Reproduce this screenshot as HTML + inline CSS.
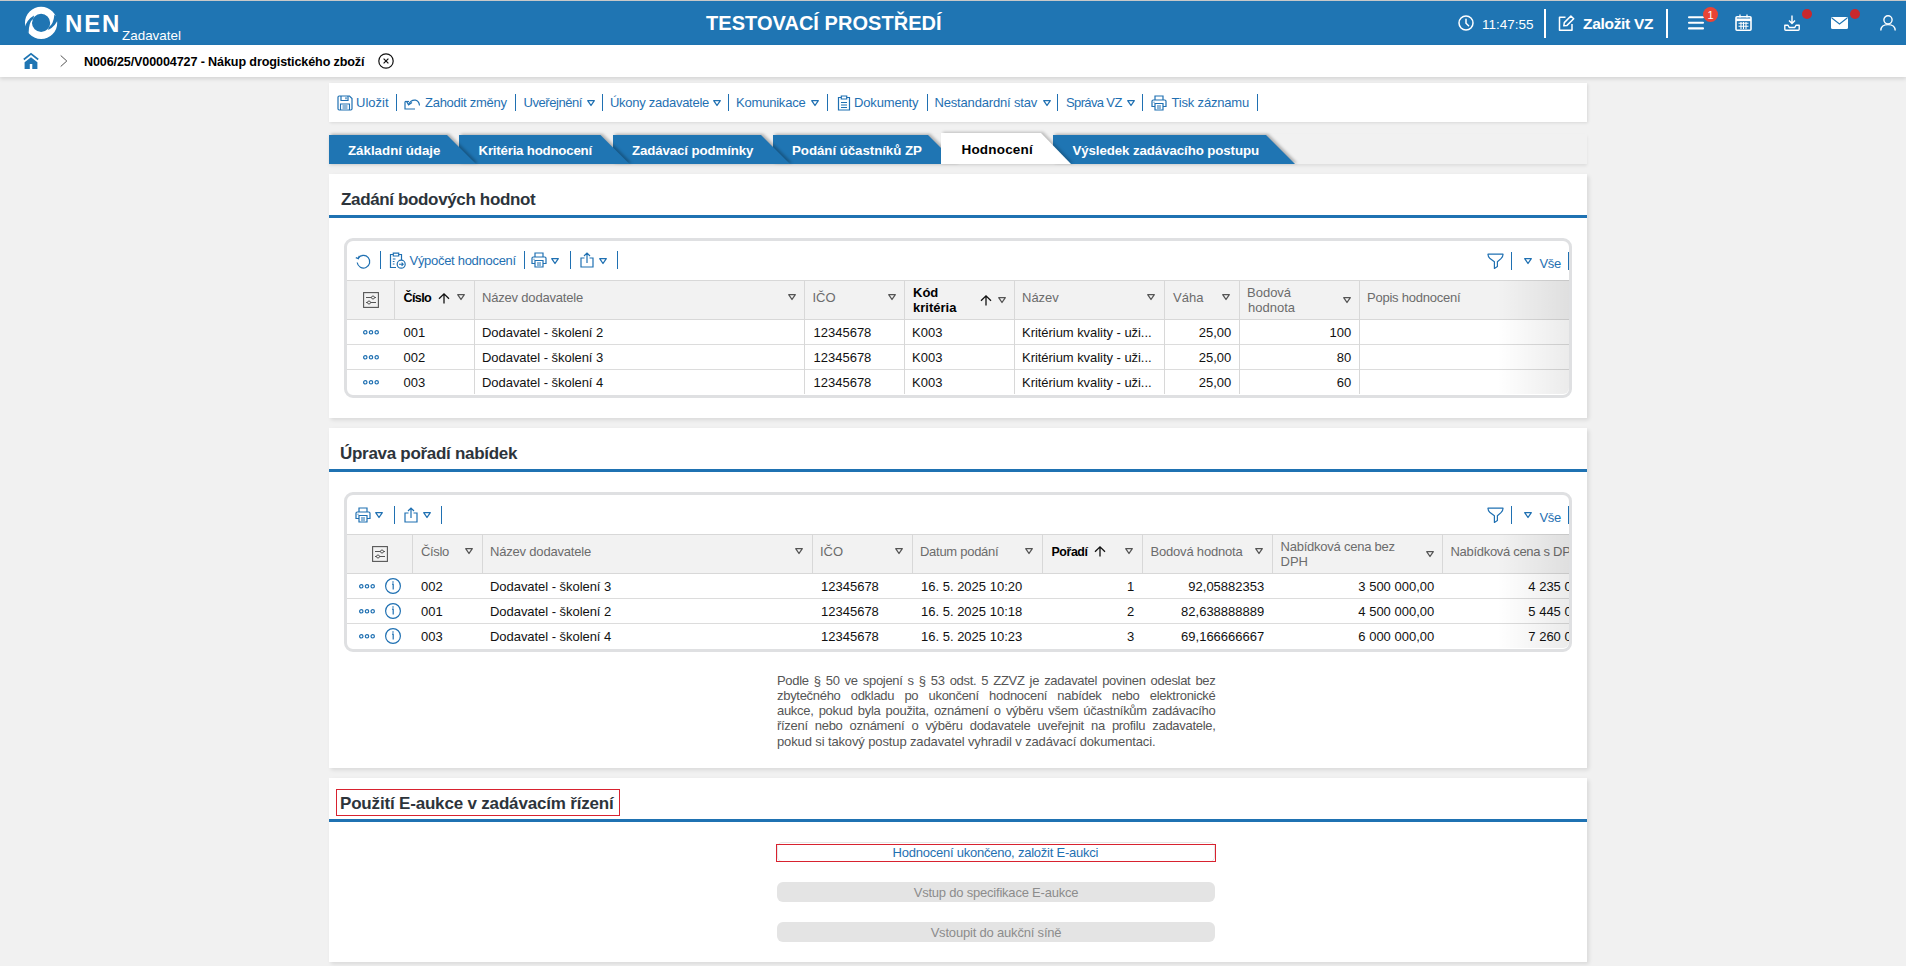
<!DOCTYPE html><html><head><meta charset="utf-8"><style>
*{box-sizing:border-box;margin:0;padding:0}
html,body{width:1906px;height:966px;overflow:hidden}
body{background:#f1f1f1;font-family:"Liberation Sans",sans-serif;position:relative;color:#111}
.a,.t{position:absolute}
.t{white-space:nowrap}
svg{position:absolute;overflow:visible}
</style></head><body><div class="a" style="left:0px;top:0px;width:1906px;height:1px;background:#c8c8c8"></div><div class="a" style="left:0px;top:1px;width:1906px;height:44px;background:#1f75b3"></div><svg style="left:20px;top:2px" width="44" height="42" viewBox="20 2 44 42"><circle cx="41.1" cy="22.9" r="12.6" fill="none" stroke="#fff" stroke-width="7"/>
<path d="M24.2 28.8 Q26.8 19.5 34 15.6 L33.6 18.4 Q28.8 21.5 28.6 33.2 Z" fill="#1f75b3"/>
<path d="M58.2 18.6 Q55.6 26.6 48.2 30 L48.4 27.6 Q53.6 24.4 54.4 14.6 Z" fill="#1f75b3"/></svg><div class="t" style="left:65.00px;top:9px;font-size:24px;line-height:29px;color:#fff;font-weight:bold;letter-spacing:1.830px;">NEN</div><div class="t" style="left:122.00px;top:28px;font-size:13.4px;line-height:16px;color:#fff;letter-spacing:0.021px;">Zadavatel</div><div class="t" style="left:706.00px;top:11px;font-size:20px;line-height:24px;color:#fff;font-weight:bold;letter-spacing:0.040px;">TESTOVACÍ PROSTŘEDÍ</div><svg style="left:1458px;top:15px" width="16" height="16" viewBox="0 0 16 16"><circle cx="8" cy="8" r="7" fill="none" stroke="#fff" stroke-width="1.5"/><path d="M8 4.2V8.3L10.6 10.8" fill="none" stroke="#fff" stroke-width="1.5" stroke-linecap="round"/></svg><div class="t" style="left:1482.00px;top:16.5px;font-size:13.5px;line-height:16px;color:#fff;letter-spacing:-0.006px;">11:47:55</div><div class="a" style="left:1544px;top:9px;width:2px;height:29px;background:#fff"></div><svg style="left:1558px;top:15px" width="17" height="16" viewBox="0 0 17 16"><path d="M7.5 2.2H1.5V15.2H14V9" fill="none" stroke="#fff" stroke-width="1.5" stroke-linejoin="round"/><path d="M5.8 10.8L6.3 7.6L12.9 1L15.7 3.8L9 10.4Z" fill="none" stroke="#fff" stroke-width="1.5" stroke-linejoin="round"/></svg><div class="t" style="left:1583.00px;top:14px;font-size:15.5px;line-height:19px;color:#fff;font-weight:bold;letter-spacing:-0.303px;">Založit VZ</div><div class="a" style="left:1666px;top:9px;width:2px;height:29px;background:#fff"></div><svg style="left:1688px;top:16px" width="16" height="14" viewBox="0 0 16 14"><path d="M1 1.2H15M1 6.8H15M1 12.4H15" stroke="#fff" stroke-width="2.1" stroke-linecap="round"/></svg><div class="a" style="left:1703px;top:7px;width:15px;height:15px;background:#ea4435;border-radius:50%"></div><div class="t" style="left:1707.50px;top:8.5px;font-size:11px;line-height:13px;color:#fff;">1</div><svg style="left:1735px;top:14px" width="17" height="17" viewBox="0 0 17 17"><rect x="1" y="2.8" width="15" height="13.4" rx="1" fill="none" stroke="#fff" stroke-width="1.6"/><path d="M1 5.8H16" stroke="#fff" stroke-width="2.6"/><path d="M5 0.5V3.5M12 0.5V3.5" stroke="#fff" stroke-width="1.3"/><path d="M3.5 9.3H13.5M3.5 12.3H13.5M6 8V15M8.5 8V15M11 8V15" stroke="#fff" stroke-width="1.1"/></svg><svg style="left:1784px;top:15px" width="16" height="16" viewBox="0 0 16 16"><path d="M8 0.5V8.5M5 5.6L8 8.6L11 5.6" fill="none" stroke="#fff" stroke-width="1.4"/><path d="M0.8 10.2V14.2Q0.8 15.2 1.8 15.2H14.2Q15.2 15.2 15.2 14.2V10.2H12L10.8 12.5H5.2L4 10.2Z" fill="none" stroke="#fff" stroke-width="1.4" stroke-linejoin="round"/></svg><div class="a" style="left:1802px;top:9px;width:10px;height:10px;background:#c8282d;border-radius:50%"></div><svg style="left:1831px;top:17px" width="17" height="12" viewBox="0 0 17 12"><rect x="0" y="0" width="17" height="12" rx="1.5" fill="#fff"/><path d="M0.8 1L8.5 7L16.2 1" fill="none" stroke="#1f75b3" stroke-width="1.1"/></svg><div class="a" style="left:1850px;top:9px;width:10px;height:10px;background:#c8282d;border-radius:50%"></div><svg style="left:1880px;top:15px" width="16" height="16" viewBox="0 0 16 16"><circle cx="8" cy="4.8" r="4.1" fill="none" stroke="#fff" stroke-width="1.4"/><path d="M0.8 15.6C0.8 11.6 3.8 9.6 8 9.6S15.2 11.6 15.2 15.6" fill="none" stroke="#fff" stroke-width="1.4"/></svg><div class="a" style="left:0px;top:45px;width:1906px;height:32px;background:#fff;box-shadow:0 2px 4px rgba(0,0,0,.12)"></div><svg style="left:23px;top:53px" width="16" height="16" viewBox="0 0 16 16"><path d="M0.8 6.5L8 0.8L15.2 6.5" fill="none" stroke="#1f75b3" stroke-width="1.7"/><path d="M1.6 16V9.2L8 4.2L14.4 9.2V16H9.3V11H6.8V16Z" fill="#1f75b3"/></svg><svg style="left:60px;top:55px" width="8" height="12" viewBox="0 0 8 12"><path d="M0.7 0.5L6.8 6L0.7 11.5" fill="none" stroke="#555" stroke-width="1"/></svg><div class="t" style="left:84.00px;top:55px;font-size:12.6px;line-height:15px;color:#000;font-weight:bold;letter-spacing:-0.131px;">N006/25/V00004727 - Nákup drogistického zboží</div><svg style="left:378px;top:53px" width="16" height="16" viewBox="0 0 16 16"><circle cx="8" cy="8" r="7.2" fill="none" stroke="#111" stroke-width="1.2"/><path d="M5.6 5.6L10.4 10.4M10.4 5.6L5.6 10.4" stroke="#111" stroke-width="1.2"/></svg><div class="a" style="left:329px;top:83px;width:1258px;height:39px;background:#fff;box-shadow:1px 1px 3px rgba(0,0,0,.10)"></div><svg style="left:337px;top:95px" width="16" height="16" viewBox="0 0 16 16"><path d="M1 2.2Q1 1 2.2 1H12.5L15 3.5V13.8Q15 15 13.8 15H2.2Q1 15 1 13.8Z" fill="none" stroke="#1f70b2" stroke-width="1.2"/><path d="M4 1V5.5H11V1M9 2.2V4.3" fill="none" stroke="#1f70b2" stroke-width="1.2"/><path d="M3.5 15V9H12.5V15M5.5 11H10.5M5.5 13H10.5" fill="none" stroke="#1f70b2" stroke-width="1.1"/></svg><div class="t" style="left:356.00px;top:95px;font-size:13px;line-height:16px;color:#1f70b2;letter-spacing:0.021px;">Uložit</div><div class="a" style="left:396px;top:94px;width:1px;height:17px;background:#1f70b2"></div><svg style="left:404px;top:96px" width="17" height="14" viewBox="0 0 17 14"><path d="M1 5.5V13H11" fill="none" stroke="#1f70b2" stroke-width="1.2"/><path d="M4.5 8.5Q7 3.5 11.5 4.2Q15 5 15.5 9.5" fill="none" stroke="#1f70b2" stroke-width="1.2"/><path d="M2.5 5.2L4.6 8.8L8 6.6" fill="none" stroke="#1f70b2" stroke-width="1.2"/><path d="M1 5.5H5" stroke="#1f70b2" stroke-width="1.2"/></svg><div class="t" style="left:425.00px;top:95px;font-size:13px;line-height:16px;color:#1f70b2;letter-spacing:-0.272px;">Zahodit změny</div><div class="a" style="left:515px;top:94px;width:1px;height:17px;background:#1f70b2"></div><div class="t" style="left:523.60px;top:95px;font-size:13px;line-height:16px;color:#1f70b2;letter-spacing:-0.451px;">Uveřejnění</div><svg style="left:587px;top:100px" width="8" height="6" viewBox="0 0 8 6"><path d="M0.7 0.7H7.3L4.0 5.5Z" fill="none" stroke="#1f70b2" stroke-width="1.3" stroke-linejoin="round"/></svg><div class="a" style="left:602px;top:94px;width:1px;height:17px;background:#1f70b2"></div><div class="t" style="left:610.00px;top:95px;font-size:13px;line-height:16px;color:#1f70b2;letter-spacing:-0.274px;">Úkony zadavatele</div><svg style="left:713px;top:100px" width="8" height="6" viewBox="0 0 8 6"><path d="M0.7 0.7H7.3L4.0 5.5Z" fill="none" stroke="#1f70b2" stroke-width="1.3" stroke-linejoin="round"/></svg><div class="a" style="left:728px;top:94px;width:1px;height:17px;background:#1f70b2"></div><div class="t" style="left:736.00px;top:95px;font-size:13px;line-height:16px;color:#1f70b2;letter-spacing:-0.201px;">Komunikace</div><svg style="left:811px;top:100px" width="8" height="6" viewBox="0 0 8 6"><path d="M0.7 0.7H7.3L4.0 5.5Z" fill="none" stroke="#1f70b2" stroke-width="1.3" stroke-linejoin="round"/></svg><div class="a" style="left:827px;top:94px;width:1px;height:17px;background:#1f70b2"></div><svg style="left:837px;top:95px" width="14" height="16" viewBox="0 0 14 16"><path d="M4 2.5H1.5V15H12.5V2.5H10" fill="none" stroke="#1f70b2" stroke-width="1.2"/><path d="M4.3 1H9.7V4H4.3Z" fill="none" stroke="#1f70b2" stroke-width="1.2"/><path d="M4 7.5H10M4 10H10M4 12.5H10" stroke="#1f70b2" stroke-width="1.1"/></svg><div class="t" style="left:854.00px;top:95px;font-size:13px;line-height:16px;color:#1f70b2;letter-spacing:-0.156px;">Dokumenty</div><div class="a" style="left:927px;top:94px;width:1px;height:17px;background:#1f70b2"></div><div class="t" style="left:934.50px;top:95px;font-size:13px;line-height:16px;color:#1f70b2;letter-spacing:-0.169px;">Nestandardní stav</div><svg style="left:1043px;top:100px" width="8" height="6" viewBox="0 0 8 6"><path d="M0.7 0.7H7.3L4.0 5.5Z" fill="none" stroke="#1f70b2" stroke-width="1.3" stroke-linejoin="round"/></svg><div class="a" style="left:1057px;top:94px;width:1px;height:17px;background:#1f70b2"></div><div class="t" style="left:1066.00px;top:95px;font-size:13px;line-height:16px;color:#1f70b2;letter-spacing:-0.634px;">Správa VZ</div><svg style="left:1127px;top:100px" width="8" height="6" viewBox="0 0 8 6"><path d="M0.7 0.7H7.3L4.0 5.5Z" fill="none" stroke="#1f70b2" stroke-width="1.3" stroke-linejoin="round"/></svg><div class="a" style="left:1142px;top:94px;width:1px;height:17px;background:#1f70b2"></div><svg style="left:1151px;top:95px" width="16" height="16" viewBox="0 0 16 16"><path d="M4 5V1H12V5" fill="none" stroke="#1f70b2" stroke-width="1.2"/><path d="M4 11.5H1V6.3Q1 5 2.3 5H13.7Q15 5 15 6.3V11.5H12" fill="none" stroke="#1f70b2" stroke-width="1.2"/><path d="M4 8.5H12V15H4Z" fill="none" stroke="#1f70b2" stroke-width="1.2"/><path d="M6 11H10M6 13H10M2.5 7.2H3.5" stroke="#1f70b2" stroke-width="1.1"/></svg><div class="t" style="left:1171.50px;top:95px;font-size:13px;line-height:16px;color:#1f70b2;letter-spacing:-0.180px;">Tisk záznamu</div><div class="a" style="left:1257px;top:94px;width:1px;height:17px;background:#1f70b2"></div><div class="a" style="left:329px;top:134px;width:1258px;height:30px;box-shadow:0 2px 3px rgba(0,0,0,.08)"></div><svg style="left:1053px;top:135px" width="242" height="29" viewBox="0 0 242 29"><path d="M0 0H213L242 29H0Z" fill="#1f75b3" style="filter:drop-shadow(2px -1px 1.5px rgba(0,0,0,.28))"/></svg><div class="t" style="left:1072.50px;top:143px;font-size:13.3px;line-height:16px;color:#fff;font-weight:bold;letter-spacing:-0.098px;">Výsledek zadávacího postupu</div><svg style="left:773px;top:135px" width="184" height="29" viewBox="0 0 184 29"><path d="M0 0H155L184 29H0Z" fill="#1f75b3" style="filter:drop-shadow(2px -1px 1.5px rgba(0,0,0,.28))"/></svg><div class="t" style="left:792.00px;top:143px;font-size:13.3px;line-height:16px;color:#fff;font-weight:bold;letter-spacing:-0.050px;">Podání účastníků ZP</div><svg style="left:613px;top:135px" width="177" height="29" viewBox="0 0 177 29"><path d="M0 0H148L177 29H0Z" fill="#1f75b3" style="filter:drop-shadow(2px -1px 1.5px rgba(0,0,0,.28))"/></svg><div class="t" style="left:632.00px;top:143px;font-size:13.3px;line-height:16px;color:#fff;font-weight:bold;letter-spacing:-0.126px;">Zadávací podmínky</div><svg style="left:459px;top:135px" width="170.5" height="29" viewBox="0 0 170.5 29"><path d="M0 0H141.5L170.5 29H0Z" fill="#1f75b3" style="filter:drop-shadow(2px -1px 1.5px rgba(0,0,0,.28))"/></svg><div class="t" style="left:478.50px;top:143px;font-size:13.3px;line-height:16px;color:#fff;font-weight:bold;letter-spacing:-0.222px;">Kritéria hodnocení</div><svg style="left:329px;top:135px" width="147" height="29" viewBox="0 0 147 29"><path d="M0 0H118L147 29H0Z" fill="#1f75b3" style="filter:drop-shadow(2px -1px 1.5px rgba(0,0,0,.28))"/></svg><div class="t" style="left:348.00px;top:143px;font-size:13.3px;line-height:16px;color:#fff;font-weight:bold;letter-spacing:0.002px;">Základní údaje</div><svg style="left:941px;top:133px" width="130" height="31" viewBox="0 0 130 31"><path d="M0 0H100L130 31H0Z" fill="#fff" style="filter:drop-shadow(2px -1px 1.5px rgba(0,0,0,.22))"/></svg><div class="t" style="left:961.50px;top:142px;font-size:13.5px;line-height:16px;color:#000;font-weight:bold;letter-spacing:0.188px;">Hodnocení</div><div class="a" style="left:329px;top:174px;width:1258px;height:244px;background:#fff;box-shadow:2px 2px 4px rgba(0,0,0,.10)"></div><div class="t" style="left:341.00px;top:189.5px;font-size:17px;line-height:20px;color:#2d343b;font-weight:bold;letter-spacing:-0.354px;">Zadání bodových hodnot</div><div class="a" style="left:329px;top:215px;width:1258px;height:3px;background:#1f72b2"></div><div class="a" style="left:344px;top:238px;width:1228px;height:160px;border:3px solid #dfe0e2;border-radius:9px;background:#fff"></div><svg style="left:355px;top:254px" width="17" height="15" viewBox="0 0 17 15"><path d="M3.2 4.2A6.3 6.3 0 1 1 2.2 8.5" fill="none" stroke="#1f70b2" stroke-width="1.2"/><path d="M0.8 3.6L3.4 4.6L4.2 1.8" fill="none" stroke="#1f70b2" stroke-width="1.2"/></svg><div class="a" style="left:380px;top:251px;width:1px;height:18px;background:#1f70b2"></div><svg style="left:389px;top:252px" width="17" height="17" viewBox="0 0 17 17"><path d="M4 2.5H1.5V15.5H7" fill="none" stroke="#1f70b2" stroke-width="1.2"/><path d="M10 2.5H12.5V8" fill="none" stroke="#1f70b2" stroke-width="1.2"/><path d="M4.3 4H9.7V1.2H4.3Z" fill="none" stroke="#1f70b2" stroke-width="1.2"/><path d="M3.8 7H6.5M3.8 9.5H5.5M3.8 12H5.5" stroke="#1f70b2" stroke-width="1.1"/><circle cx="12.2" cy="12.2" r="4" fill="#fff" stroke="#1f70b2" stroke-width="1.2"/><path d="M10 12.2H14.2M12.6 10.6L14.2 12.2L12.6 13.8" fill="none" stroke="#1f70b2" stroke-width="1.1"/></svg><div class="t" style="left:409.50px;top:253px;font-size:13px;line-height:16px;color:#1f70b2;letter-spacing:-0.293px;">Výpočet hodnocení</div><div class="a" style="left:524px;top:251px;width:1px;height:18px;background:#1f70b2"></div><svg style="left:531px;top:252px" width="16" height="16" viewBox="0 0 16 16"><path d="M4 5V1H12V5" fill="none" stroke="#1f70b2" stroke-width="1.2"/><path d="M4 11.5H1V6.3Q1 5 2.3 5H13.7Q15 5 15 6.3V11.5H12" fill="none" stroke="#1f70b2" stroke-width="1.2"/><path d="M4 8.5H12V15H4Z" fill="none" stroke="#1f70b2" stroke-width="1.2"/><path d="M6 11H10M6 13H10M2.5 7.2H3.5" stroke="#1f70b2" stroke-width="1.1"/></svg><svg style="left:551px;top:258px" width="8" height="6" viewBox="0 0 8 6"><path d="M0.7 0.7H7.3L4.0 5.5Z" fill="none" stroke="#1f70b2" stroke-width="1.3" stroke-linejoin="round"/></svg><div class="a" style="left:570px;top:251px;width:1px;height:18px;background:#1f70b2"></div><svg style="left:580px;top:252px" width="14" height="16" viewBox="0 0 14 16"><path d="M4.5 6H1V15H13V6H9.5" fill="none" stroke="#1f70b2" stroke-width="1.2"/><path d="M7 11V1M4 4L7 1L10 4" fill="none" stroke="#1f70b2" stroke-width="1.2"/></svg><svg style="left:599px;top:258px" width="8" height="6" viewBox="0 0 8 6"><path d="M0.7 0.7H7.3L4.0 5.5Z" fill="none" stroke="#1f70b2" stroke-width="1.3" stroke-linejoin="round"/></svg><div class="a" style="left:617px;top:251px;width:1px;height:18px;background:#1f70b2"></div><svg style="left:1487px;top:253px" width="17" height="16" viewBox="0 0 17 16"><path d="M1 1.2H16Q16.2 3.6 14 5.6L10.4 8.8V13.6L7.4 15.4V8.8L3 5.6Q0.8 3.6 1 1.2Z" fill="none" stroke="#1f70b2" stroke-width="1.2" stroke-linejoin="round"/></svg><div class="a" style="left:1511px;top:252px;width:1px;height:18px;background:#1f70b2"></div><svg style="left:1524px;top:258px" width="8" height="6" viewBox="0 0 8 6"><path d="M0.7 0.7H7.3L4.0 5.5Z" fill="none" stroke="#1f70b2" stroke-width="1.3" stroke-linejoin="round"/></svg><div class="t" style="left:1539.50px;top:255.5px;font-size:13px;line-height:16px;color:#1f70b2;letter-spacing:-0.335px;">Vše</div><div class="a" style="left:1568px;top:252px;width:1px;height:18px;background:#1f70b2"></div><div class="a" style="left:347px;top:280px;width:1222px;height:40px;background:#f2f2f2;border-top:1px solid #d8d8d8;border-bottom:1px solid #d8d8d8"></div><div class="a" style="left:347px;top:344px;width:1222px;height:1px;background:#dcdcdc"></div><div class="a" style="left:347px;top:369px;width:1222px;height:1px;background:#dcdcdc"></div><div class="a" style="left:394px;top:281px;width:1px;height:38px;background:#d8d8d8"></div><div class="a" style="left:474px;top:281px;width:1px;height:113px;background:#d8d8d8"></div><div class="a" style="left:804px;top:281px;width:1px;height:113px;background:#d8d8d8"></div><div class="a" style="left:904px;top:281px;width:1px;height:113px;background:#d8d8d8"></div><div class="a" style="left:1014px;top:281px;width:1px;height:113px;background:#d8d8d8"></div><div class="a" style="left:1164px;top:281px;width:1px;height:113px;background:#d8d8d8"></div><div class="a" style="left:1239px;top:281px;width:1px;height:113px;background:#d8d8d8"></div><div class="a" style="left:1359px;top:281px;width:1px;height:113px;background:#d8d8d8"></div><svg style="left:363px;top:292px" width="16" height="16" viewBox="0 0 16 16"><rect x="0.6" y="0.6" width="14.8" height="14.8" fill="none" stroke="#555" stroke-width="1.1"/><path d="M3 5.5H13M3 10.5H13" stroke="#555" stroke-width="1"/><circle cx="10" cy="5.5" r="1.5" fill="#f2f2f2" stroke="#555" stroke-width="1"/><circle cx="6" cy="10.5" r="1.5" fill="#f2f2f2" stroke="#555" stroke-width="1"/></svg><div class="t" style="left:403.50px;top:291px;font-size:12.6px;line-height:15px;color:#000;font-weight:bold;letter-spacing:-0.649px;">Číslo</div><svg style="left:438px;top:292.5px" width="12" height="11" viewBox="0 0 12 11"><path d="M6 10.5V1M1 5.8L6 0.8L11 5.8" fill="none" stroke="#111" stroke-width="1.3"/></svg><svg style="left:457px;top:294px" width="8" height="6" viewBox="0 0 8 6"><path d="M0.7 0.7H7.3L4.0 5.5Z" fill="none" stroke="#555" stroke-width="1.3" stroke-linejoin="round"/></svg><div class="t" style="left:482.00px;top:290px;font-size:13px;line-height:16px;color:#6c6c6c;letter-spacing:-0.189px;">Název dodavatele</div><svg style="left:787.5px;top:294px" width="8" height="6" viewBox="0 0 8 6"><path d="M0.7 0.7H7.3L4.0 5.5Z" fill="none" stroke="#555" stroke-width="1.3" stroke-linejoin="round"/></svg><div class="t" style="left:812.50px;top:290px;font-size:13px;line-height:16px;color:#6c6c6c;">IČO</div><svg style="left:887.5px;top:294px" width="8" height="6" viewBox="0 0 8 6"><path d="M0.7 0.7H7.3L4.0 5.5Z" fill="none" stroke="#555" stroke-width="1.3" stroke-linejoin="round"/></svg><div class="t" style="left:913.00px;top:284.5px;font-size:13px;line-height:16px;color:#000;font-weight:bold;">Kód</div><div class="t" style="left:913.00px;top:299.5px;font-size:13px;line-height:16px;color:#000;font-weight:bold;">kritéria</div><svg style="left:979.5px;top:294.5px" width="12" height="11" viewBox="0 0 12 11"><path d="M6 10.5V1M1 5.8L6 0.8L11 5.8" fill="none" stroke="#111" stroke-width="1.3"/></svg><svg style="left:997.5px;top:297px" width="8" height="6" viewBox="0 0 8 6"><path d="M0.7 0.7H7.3L4.0 5.5Z" fill="none" stroke="#555" stroke-width="1.3" stroke-linejoin="round"/></svg><div class="t" style="left:1022.00px;top:290px;font-size:13px;line-height:16px;color:#6c6c6c;">Název</div><svg style="left:1147px;top:294px" width="8" height="6" viewBox="0 0 8 6"><path d="M0.7 0.7H7.3L4.0 5.5Z" fill="none" stroke="#555" stroke-width="1.3" stroke-linejoin="round"/></svg><div class="t" style="left:1173.00px;top:290px;font-size:13px;line-height:16px;color:#6c6c6c;">Váha</div><svg style="left:1222px;top:294px" width="8" height="6" viewBox="0 0 8 6"><path d="M0.7 0.7H7.3L4.0 5.5Z" fill="none" stroke="#555" stroke-width="1.3" stroke-linejoin="round"/></svg><div class="t" style="left:1247.00px;top:285px;font-size:13px;line-height:16px;color:#6c6c6c;">Bodová</div><div class="t" style="left:1248.00px;top:299.5px;font-size:13px;line-height:16px;color:#6c6c6c;">hodnota</div><svg style="left:1342.5px;top:297px" width="8" height="6" viewBox="0 0 8 6"><path d="M0.7 0.7H7.3L4.0 5.5Z" fill="none" stroke="#555" stroke-width="1.3" stroke-linejoin="round"/></svg><div class="t" style="left:1367.00px;top:290px;font-size:13px;line-height:16px;color:#6c6c6c;letter-spacing:-0.231px;">Popis hodnocení</div><svg style="left:363px;top:330px" width="16" height="5" viewBox="0 0 16 5"><circle cx="2.3" cy="2.3" r="1.7" fill="none" stroke="#1f70b2" stroke-width="1.2"/><circle cx="8" cy="2.3" r="1.7" fill="none" stroke="#1f70b2" stroke-width="1.2"/><circle cx="13.7" cy="2.3" r="1.7" fill="none" stroke="#1f70b2" stroke-width="1.2"/></svg><div class="t" style="left:403.50px;top:325px;font-size:13px;line-height:16px;color:#111;">001</div><div class="t" style="left:482.00px;top:325px;font-size:13px;line-height:16px;color:#111;letter-spacing:-0.045px;">Dodavatel - školení 2</div><div class="t" style="left:813.50px;top:325px;font-size:13px;line-height:16px;color:#111;">12345678</div><div class="t" style="left:912.00px;top:325px;font-size:13px;line-height:16px;color:#111;">K003</div><div class="t" style="left:1022.00px;top:325px;font-size:13px;line-height:16px;color:#111;letter-spacing:-0.045px;">Kritérium kvality - uži...</div><div class="t" style="left:1198.70px;top:325px;font-size:13px;line-height:16px;color:#111;">25,00</div><div class="t" style="left:1329.54px;top:325px;font-size:13px;line-height:16px;color:#111;">100</div><svg style="left:363px;top:355px" width="16" height="5" viewBox="0 0 16 5"><circle cx="2.3" cy="2.3" r="1.7" fill="none" stroke="#1f70b2" stroke-width="1.2"/><circle cx="8" cy="2.3" r="1.7" fill="none" stroke="#1f70b2" stroke-width="1.2"/><circle cx="13.7" cy="2.3" r="1.7" fill="none" stroke="#1f70b2" stroke-width="1.2"/></svg><div class="t" style="left:403.50px;top:350px;font-size:13px;line-height:16px;color:#111;">002</div><div class="t" style="left:482.00px;top:350px;font-size:13px;line-height:16px;color:#111;letter-spacing:-0.045px;">Dodavatel - školení 3</div><div class="t" style="left:813.50px;top:350px;font-size:13px;line-height:16px;color:#111;">12345678</div><div class="t" style="left:912.00px;top:350px;font-size:13px;line-height:16px;color:#111;">K003</div><div class="t" style="left:1022.00px;top:350px;font-size:13px;line-height:16px;color:#111;letter-spacing:-0.045px;">Kritérium kvality - uži...</div><div class="t" style="left:1198.70px;top:350px;font-size:13px;line-height:16px;color:#111;">25,00</div><div class="t" style="left:1336.77px;top:350px;font-size:13px;line-height:16px;color:#111;">80</div><svg style="left:363px;top:380px" width="16" height="5" viewBox="0 0 16 5"><circle cx="2.3" cy="2.3" r="1.7" fill="none" stroke="#1f70b2" stroke-width="1.2"/><circle cx="8" cy="2.3" r="1.7" fill="none" stroke="#1f70b2" stroke-width="1.2"/><circle cx="13.7" cy="2.3" r="1.7" fill="none" stroke="#1f70b2" stroke-width="1.2"/></svg><div class="t" style="left:403.50px;top:375px;font-size:13px;line-height:16px;color:#111;">003</div><div class="t" style="left:482.00px;top:375px;font-size:13px;line-height:16px;color:#111;letter-spacing:-0.045px;">Dodavatel - školení 4</div><div class="t" style="left:813.50px;top:375px;font-size:13px;line-height:16px;color:#111;">12345678</div><div class="t" style="left:912.00px;top:375px;font-size:13px;line-height:16px;color:#111;">K003</div><div class="t" style="left:1022.00px;top:375px;font-size:13px;line-height:16px;color:#111;letter-spacing:-0.045px;">Kritérium kvality - uži...</div><div class="t" style="left:1198.70px;top:375px;font-size:13px;line-height:16px;color:#111;">25,00</div><div class="t" style="left:1336.77px;top:375px;font-size:13px;line-height:16px;color:#111;">60</div><div class="a" style="left:1497px;top:280px;width:72px;height:114px;background:linear-gradient(to right,rgba(0,0,0,0),rgba(0,0,0,.08));border-bottom-right-radius:6px"></div><div class="a" style="left:329px;top:428px;width:1258px;height:340px;background:#fff;box-shadow:2px 2px 4px rgba(0,0,0,.10)"></div><div class="t" style="left:340.00px;top:443.5px;font-size:17px;line-height:20px;color:#2d343b;font-weight:bold;letter-spacing:-0.291px;">Úprava pořadí nabídek</div><div class="a" style="left:329px;top:469px;width:1258px;height:3px;background:#1f72b2"></div><div class="a" style="left:344px;top:492px;width:1228px;height:160px;border:3px solid #dfe0e2;border-radius:9px;background:#fff"></div><svg style="left:355px;top:507px" width="16" height="16" viewBox="0 0 16 16"><path d="M4 5V1H12V5" fill="none" stroke="#1f70b2" stroke-width="1.2"/><path d="M4 11.5H1V6.3Q1 5 2.3 5H13.7Q15 5 15 6.3V11.5H12" fill="none" stroke="#1f70b2" stroke-width="1.2"/><path d="M4 8.5H12V15H4Z" fill="none" stroke="#1f70b2" stroke-width="1.2"/><path d="M6 11H10M6 13H10M2.5 7.2H3.5" stroke="#1f70b2" stroke-width="1.1"/></svg><svg style="left:375px;top:512px" width="8" height="6" viewBox="0 0 8 6"><path d="M0.7 0.7H7.3L4.0 5.5Z" fill="none" stroke="#1f70b2" stroke-width="1.3" stroke-linejoin="round"/></svg><div class="a" style="left:394px;top:506px;width:1px;height:18px;background:#1f70b2"></div><svg style="left:404px;top:507px" width="14" height="16" viewBox="0 0 14 16"><path d="M4.5 6H1V15H13V6H9.5" fill="none" stroke="#1f70b2" stroke-width="1.2"/><path d="M7 11V1M4 4L7 1L10 4" fill="none" stroke="#1f70b2" stroke-width="1.2"/></svg><svg style="left:423px;top:512px" width="8" height="6" viewBox="0 0 8 6"><path d="M0.7 0.7H7.3L4.0 5.5Z" fill="none" stroke="#1f70b2" stroke-width="1.3" stroke-linejoin="round"/></svg><div class="a" style="left:441px;top:506px;width:1px;height:18px;background:#1f70b2"></div><svg style="left:1487px;top:507px" width="17" height="16" viewBox="0 0 17 16"><path d="M1 1.2H16Q16.2 3.6 14 5.6L10.4 8.8V13.6L7.4 15.4V8.8L3 5.6Q0.8 3.6 1 1.2Z" fill="none" stroke="#1f70b2" stroke-width="1.2" stroke-linejoin="round"/></svg><div class="a" style="left:1511px;top:506px;width:1px;height:18px;background:#1f70b2"></div><svg style="left:1523.5px;top:512px" width="8" height="6" viewBox="0 0 8 6"><path d="M0.7 0.7H7.3L4.0 5.5Z" fill="none" stroke="#1f70b2" stroke-width="1.3" stroke-linejoin="round"/></svg><div class="t" style="left:1539.50px;top:509.5px;font-size:13px;line-height:16px;color:#1f70b2;letter-spacing:-0.335px;">Vše</div><div class="a" style="left:1568px;top:506px;width:1px;height:18px;background:#1f70b2"></div><div class="a" style="left:347px;top:534px;width:1222px;height:40px;background:#f2f2f2;border-top:1px solid #d8d8d8;border-bottom:1px solid #d8d8d8"></div><div class="a" style="left:347px;top:598px;width:1222px;height:1px;background:#dcdcdc"></div><div class="a" style="left:347px;top:623px;width:1222px;height:1px;background:#dcdcdc"></div><div class="a" style="left:412px;top:535px;width:1px;height:38px;background:#d8d8d8"></div><div class="a" style="left:482px;top:535px;width:1px;height:38px;background:#d8d8d8"></div><div class="a" style="left:812px;top:535px;width:1px;height:38px;background:#d8d8d8"></div><div class="a" style="left:912px;top:535px;width:1px;height:38px;background:#d8d8d8"></div><div class="a" style="left:1042px;top:535px;width:1px;height:38px;background:#d8d8d8"></div><div class="a" style="left:1142px;top:535px;width:1px;height:38px;background:#d8d8d8"></div><div class="a" style="left:1272px;top:535px;width:1px;height:38px;background:#d8d8d8"></div><div class="a" style="left:1442px;top:535px;width:1px;height:38px;background:#d8d8d8"></div><div class="a" style="left:0;top:0;width:1906px;height:966px;clip-path:inset(534px 337px 317px 347px)"><svg style="left:372px;top:546px" width="16" height="16" viewBox="0 0 16 16"><rect x="0.6" y="0.6" width="14.8" height="14.8" fill="none" stroke="#555" stroke-width="1.1"/><path d="M3 5.5H13M3 10.5H13" stroke="#555" stroke-width="1"/><circle cx="10" cy="5.5" r="1.5" fill="#f2f2f2" stroke="#555" stroke-width="1"/><circle cx="6" cy="10.5" r="1.5" fill="#f2f2f2" stroke="#555" stroke-width="1"/></svg><div class="t" style="left:421.00px;top:543.5px;font-size:13px;line-height:16px;color:#6c6c6c;letter-spacing:-0.347px;">Číslo</div><svg style="left:465px;top:548px" width="8" height="6" viewBox="0 0 8 6"><path d="M0.7 0.7H7.3L4.0 5.5Z" fill="none" stroke="#555" stroke-width="1.3" stroke-linejoin="round"/></svg><div class="t" style="left:490.00px;top:543.5px;font-size:13px;line-height:16px;color:#6c6c6c;letter-spacing:-0.189px;">Název dodavatele</div><svg style="left:795px;top:548px" width="8" height="6" viewBox="0 0 8 6"><path d="M0.7 0.7H7.3L4.0 5.5Z" fill="none" stroke="#555" stroke-width="1.3" stroke-linejoin="round"/></svg><div class="t" style="left:820.00px;top:543.5px;font-size:13px;line-height:16px;color:#6c6c6c;">IČO</div><svg style="left:895px;top:548px" width="8" height="6" viewBox="0 0 8 6"><path d="M0.7 0.7H7.3L4.0 5.5Z" fill="none" stroke="#555" stroke-width="1.3" stroke-linejoin="round"/></svg><div class="t" style="left:920.00px;top:543.5px;font-size:13px;line-height:16px;color:#6c6c6c;letter-spacing:-0.277px;">Datum podání</div><svg style="left:1025px;top:548px" width="8" height="6" viewBox="0 0 8 6"><path d="M0.7 0.7H7.3L4.0 5.5Z" fill="none" stroke="#555" stroke-width="1.3" stroke-linejoin="round"/></svg><div class="t" style="left:1051.50px;top:544.5px;font-size:12.4px;line-height:15px;color:#000;font-weight:bold;letter-spacing:-0.423px;">Pořadí</div><svg style="left:1094px;top:545.5px" width="12" height="11" viewBox="0 0 12 11"><path d="M6 10.5V1M1 5.8L6 0.8L11 5.8" fill="none" stroke="#111" stroke-width="1.3"/></svg><svg style="left:1125px;top:548px" width="8" height="6" viewBox="0 0 8 6"><path d="M0.7 0.7H7.3L4.0 5.5Z" fill="none" stroke="#555" stroke-width="1.3" stroke-linejoin="round"/></svg><div class="t" style="left:1150.50px;top:543.5px;font-size:13px;line-height:16px;color:#6c6c6c;letter-spacing:-0.190px;">Bodová hodnota</div><svg style="left:1255px;top:548px" width="8" height="6" viewBox="0 0 8 6"><path d="M0.7 0.7H7.3L4.0 5.5Z" fill="none" stroke="#555" stroke-width="1.3" stroke-linejoin="round"/></svg><div class="t" style="left:1280.50px;top:539px;font-size:13px;line-height:16px;color:#6c6c6c;letter-spacing:-0.237px;">Nabídková cena bez</div><div class="t" style="left:1280.50px;top:554px;font-size:13px;line-height:16px;color:#6c6c6c;">DPH</div><svg style="left:1425.5px;top:551px" width="8" height="6" viewBox="0 0 8 6"><path d="M0.7 0.7H7.3L4.0 5.5Z" fill="none" stroke="#555" stroke-width="1.3" stroke-linejoin="round"/></svg><div class="t" style="left:1450.50px;top:543.5px;font-size:13px;line-height:16px;color:#6c6c6c;letter-spacing:-0.302px;">Nabídková cena s DPH</div><svg style="left:359px;top:584px" width="16" height="5" viewBox="0 0 16 5"><circle cx="2.3" cy="2.3" r="1.7" fill="none" stroke="#1f70b2" stroke-width="1.2"/><circle cx="8" cy="2.3" r="1.7" fill="none" stroke="#1f70b2" stroke-width="1.2"/><circle cx="13.7" cy="2.3" r="1.7" fill="none" stroke="#1f70b2" stroke-width="1.2"/></svg><svg style="left:385px;top:578px" width="16" height="16" viewBox="0 0 16 16"><circle cx="8" cy="8" r="7.4" fill="none" stroke="#1f70b2" stroke-width="1.2"/><path d="M7 6.2H8.2V11.5" fill="none" stroke="#1f70b2" stroke-width="1.2"/><circle cx="8" cy="4" r="0.8" fill="#1f70b2"/></svg><div class="t" style="left:421.00px;top:579px;font-size:13px;line-height:16px;color:#111;">002</div><div class="t" style="left:490.00px;top:579px;font-size:13px;line-height:16px;color:#111;letter-spacing:-0.045px;">Dodavatel - školení 3</div><div class="t" style="left:821.00px;top:579px;font-size:13px;line-height:16px;color:#111;">12345678</div><div class="t" style="left:921.00px;top:579px;font-size:13px;line-height:16px;color:#111;">16. 5. 2025 10:20</div><div class="t" style="left:1127.00px;top:579px;font-size:13px;line-height:16px;color:#111;">1</div><div class="t" style="left:1188.32px;top:579px;font-size:13px;line-height:16px;color:#111;">92,05882353</div><div class="t" style="left:1358.32px;top:579px;font-size:13px;line-height:16px;color:#111;">3 500 000,00</div><div class="t" style="left:1528.32px;top:579px;font-size:13px;line-height:16px;color:#111;">4 235 000,00</div><svg style="left:359px;top:609px" width="16" height="5" viewBox="0 0 16 5"><circle cx="2.3" cy="2.3" r="1.7" fill="none" stroke="#1f70b2" stroke-width="1.2"/><circle cx="8" cy="2.3" r="1.7" fill="none" stroke="#1f70b2" stroke-width="1.2"/><circle cx="13.7" cy="2.3" r="1.7" fill="none" stroke="#1f70b2" stroke-width="1.2"/></svg><svg style="left:385px;top:603px" width="16" height="16" viewBox="0 0 16 16"><circle cx="8" cy="8" r="7.4" fill="none" stroke="#1f70b2" stroke-width="1.2"/><path d="M7 6.2H8.2V11.5" fill="none" stroke="#1f70b2" stroke-width="1.2"/><circle cx="8" cy="4" r="0.8" fill="#1f70b2"/></svg><div class="t" style="left:421.00px;top:604px;font-size:13px;line-height:16px;color:#111;">001</div><div class="t" style="left:490.00px;top:604px;font-size:13px;line-height:16px;color:#111;letter-spacing:-0.045px;">Dodavatel - školení 2</div><div class="t" style="left:821.00px;top:604px;font-size:13px;line-height:16px;color:#111;">12345678</div><div class="t" style="left:921.00px;top:604px;font-size:13px;line-height:16px;color:#111;">16. 5. 2025 10:18</div><div class="t" style="left:1127.00px;top:604px;font-size:13px;line-height:16px;color:#111;">2</div><div class="t" style="left:1181.09px;top:604px;font-size:13px;line-height:16px;color:#111;">82,638888889</div><div class="t" style="left:1358.32px;top:604px;font-size:13px;line-height:16px;color:#111;">4 500 000,00</div><div class="t" style="left:1528.32px;top:604px;font-size:13px;line-height:16px;color:#111;">5 445 000,00</div><svg style="left:359px;top:634px" width="16" height="5" viewBox="0 0 16 5"><circle cx="2.3" cy="2.3" r="1.7" fill="none" stroke="#1f70b2" stroke-width="1.2"/><circle cx="8" cy="2.3" r="1.7" fill="none" stroke="#1f70b2" stroke-width="1.2"/><circle cx="13.7" cy="2.3" r="1.7" fill="none" stroke="#1f70b2" stroke-width="1.2"/></svg><svg style="left:385px;top:628px" width="16" height="16" viewBox="0 0 16 16"><circle cx="8" cy="8" r="7.4" fill="none" stroke="#1f70b2" stroke-width="1.2"/><path d="M7 6.2H8.2V11.5" fill="none" stroke="#1f70b2" stroke-width="1.2"/><circle cx="8" cy="4" r="0.8" fill="#1f70b2"/></svg><div class="t" style="left:421.00px;top:629px;font-size:13px;line-height:16px;color:#111;">003</div><div class="t" style="left:490.00px;top:629px;font-size:13px;line-height:16px;color:#111;letter-spacing:-0.045px;">Dodavatel - školení 4</div><div class="t" style="left:821.00px;top:629px;font-size:13px;line-height:16px;color:#111;">12345678</div><div class="t" style="left:921.00px;top:629px;font-size:13px;line-height:16px;color:#111;">16. 5. 2025 10:23</div><div class="t" style="left:1127.00px;top:629px;font-size:13px;line-height:16px;color:#111;">3</div><div class="t" style="left:1181.09px;top:629px;font-size:13px;line-height:16px;color:#111;">69,166666667</div><div class="t" style="left:1358.32px;top:629px;font-size:13px;line-height:16px;color:#111;">6 000 000,00</div><div class="t" style="left:1528.32px;top:629px;font-size:13px;line-height:16px;color:#111;">7 260 000,00</div></div><div class="a" style="left:1497px;top:534px;width:72px;height:114px;background:linear-gradient(to right,rgba(0,0,0,0),rgba(0,0,0,.08));border-bottom-right-radius:6px"></div><div class="a" style="left:777px;top:673.0px;width:438.5px;font-size:13px;line-height:15px;color:#555;text-align:justify;text-align-last:justify;letter-spacing:-0.3px">Podle § 50 ve spojení s § 53 odst. 5 ZZVZ je zadavatel povinen odeslat bez</div><div class="a" style="left:777px;top:688.1px;width:438.5px;font-size:13px;line-height:15px;color:#555;text-align:justify;text-align-last:justify;letter-spacing:-0.3px">zbytečného odkladu po ukončení hodnocení nabídek nebo elektronické</div><div class="a" style="left:777px;top:703.2px;width:438.5px;font-size:13px;line-height:15px;color:#555;text-align:justify;text-align-last:justify;letter-spacing:-0.3px">aukce, pokud byla použita, oznámení o výběru všem účastníkům zadávacího</div><div class="a" style="left:777px;top:718.3px;width:438.5px;font-size:13px;line-height:15px;color:#555;text-align:justify;text-align-last:justify;letter-spacing:-0.3px">řízení nebo oznámení o výběru dodavatele uveřejnit na profilu zadavatele,</div><div class="t" style="left:777.00px;top:733.6px;font-size:13px;line-height:16px;color:#555;letter-spacing:-0.125px;">pokud si takový postup zadavatel vyhradil v zadávací dokumentaci.</div><div class="a" style="left:329px;top:778px;width:1258px;height:184px;background:#fff;box-shadow:2px 2px 4px rgba(0,0,0,.10)"></div><div class="t" style="left:340.00px;top:793.5px;font-size:17px;line-height:20px;color:#2d343b;font-weight:bold;letter-spacing:-0.180px;">Použití E-aukce v zadávacím řízení</div><div class="a" style="left:329px;top:819px;width:1258px;height:3px;background:#1f72b2"></div><div class="a" style="left:336px;top:789px;width:284px;height:27px;border:1px solid #d8222f"></div><div class="a" style="left:777px;top:842px;width:438px;height:20px;background:#fff;border:1px solid #e6e6e6;border-radius:5px"></div><div class="a" style="left:776px;top:844px;width:440px;height:18px;border:1px solid #d8222f"></div><div class="t" style="left:892.50px;top:844.5px;font-size:13px;line-height:16px;color:#1f70b2;letter-spacing:-0.236px;">Hodnocení ukončeno, založit E-aukci</div><div class="a" style="left:777px;top:882px;width:438px;height:20px;background:#e4e4e4;border-radius:6px"></div><div class="t" style="left:913.70px;top:885px;font-size:13px;line-height:16px;color:#8c8c8c;letter-spacing:-0.211px;">Vstup do specifikace E-aukce</div><div class="a" style="left:777px;top:922px;width:438px;height:20px;background:#e4e4e4;border-radius:6px"></div><div class="t" style="left:930.65px;top:925px;font-size:13px;line-height:16px;color:#8c8c8c;letter-spacing:-0.191px;">Vstoupit do aukční síně</div></body></html>
